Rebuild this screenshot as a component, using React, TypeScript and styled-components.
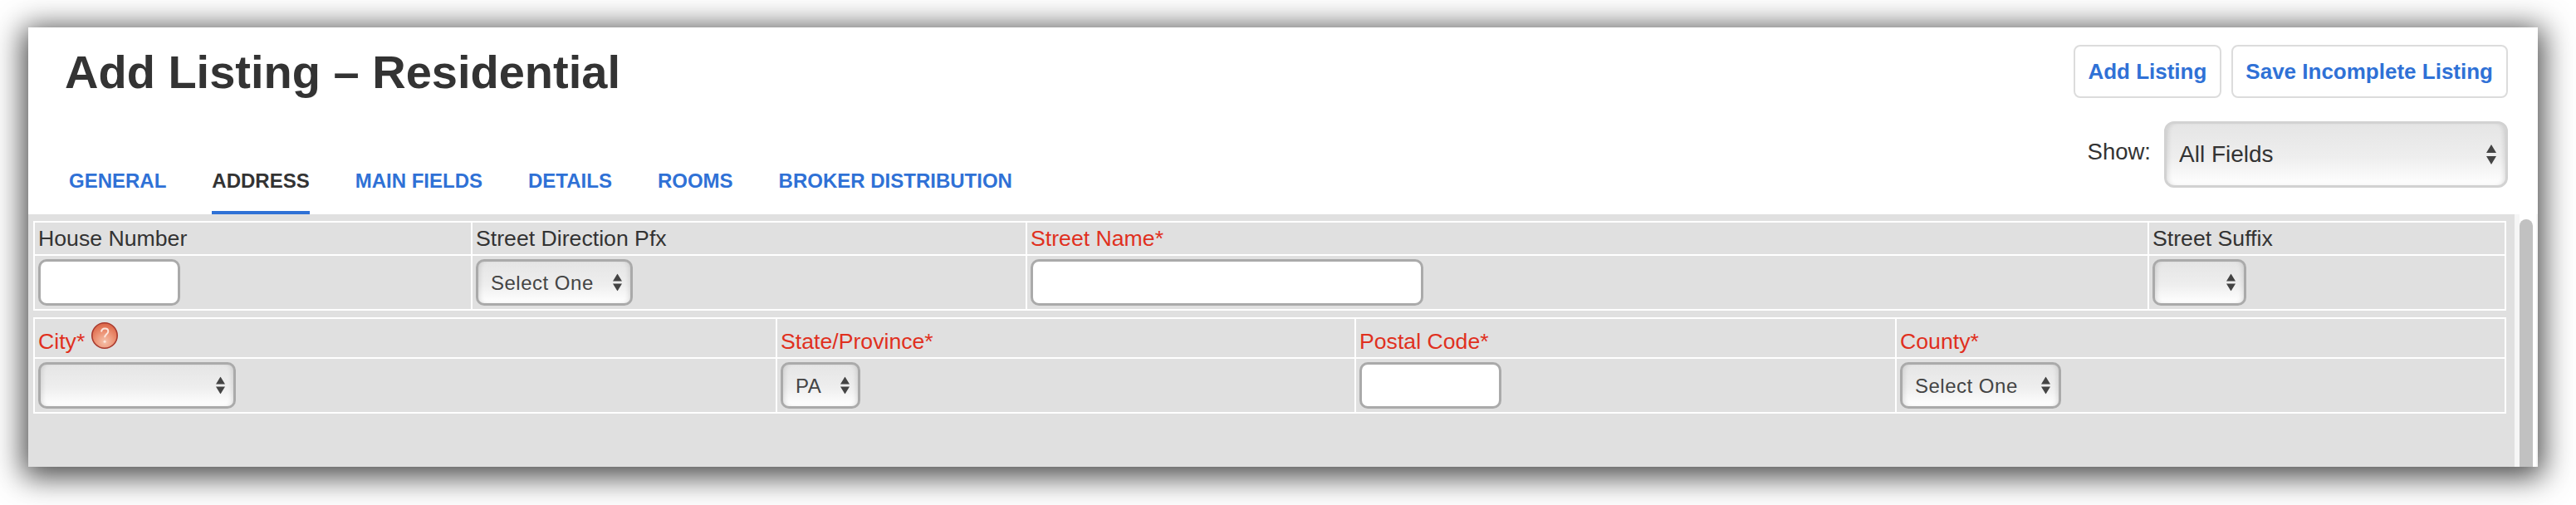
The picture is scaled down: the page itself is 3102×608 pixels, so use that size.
import React from "react";
import styled, { createGlobalStyle } from "styled-components";

const GlobalStyle = createGlobalStyle`
  html, body {
    margin: 0;
    background: #fff;
    overflow: hidden;
  }
  body {
    font-family: "Liberation Sans", Arial, sans-serif;
    color: #333;
  }
  * {
    box-sizing: border-box;
  }
`;

const Page = styled.div`
  padding: 33px 46px 46px 34px;
`;

const Panel = styled.div`
  display: flex;
  flex-direction: column;
  height: 529px;
  background: #fff;
  box-shadow: 0 6px 34px 6px rgba(0, 0, 0, 0.72);
`;

const Header = styled.header`
  display: flex;
  justify-content: space-between;
  height: 225px;
`;

const TitleColumn = styled.div`
  display: flex;
  flex-direction: column;
  justify-content: space-between;
  padding: 22px 0 0 44px;
`;

const Title = styled.h1`
  margin: 0;
  font-size: 56px;
  line-height: 64px;
  font-weight: 700;
  color: #333;
`;

const Tabs = styled.nav`
  display: flex;
  gap: 55px;
  margin-left: 5px;
`;

const Tab = styled.a<{ $active?: boolean }>`
  padding-bottom: 22px;
  border-bottom: 4px solid ${(p) => (p.$active ? "#2f71d6" : "transparent")};
  font-size: 24px;
  line-height: 28px;
  font-weight: 700;
  color: ${(p) => (p.$active ? "#333" : "#2f71d6")};
`;

const ActionColumn = styled.div`
  display: flex;
  flex-direction: column;
  align-items: flex-end;
  gap: 28px;
  padding: 21px 36px 0 0;
`;

const Actions = styled.div`
  display: flex;
  gap: 12px;
`;

const ActionButton = styled.button`
  height: 64px;
  padding: 0 16px 0 15px;
  background: #fff;
  border: 2px solid #dcdcdc;
  border-radius: 8px;
  font-family: inherit;
  font-size: 26px;
  font-weight: 700;
  color: #2f71d6;
`;

const ShowRow = styled.div`
  display: flex;
  align-items: center;
  gap: 16px;
`;

const ShowLabel = styled.label`
  margin-bottom: 6px;
  font-size: 27.5px;
  line-height: 30px;
  color: #333;
`;

const SelectWrap = styled.div<{ $width: number }>`
  position: relative;
  width: ${(p) => p.$width}px;
`;

const Select = styled.select<{ $large?: boolean }>`
  display: block;
  width: 100%;
  height: ${(p) => (p.$large ? 80 : 56)}px;
  padding: 0 0 ${(p) => (p.$large ? 2 : 0)}px 15px;
  appearance: none;
  background: linear-gradient(#e5e5e5, #eeeeee 55%, #fcfcfc 92%);
  border: 3px solid ${(p) => (p.$large ? "#d2d2d2" : "#aaa")};
  border-radius: ${(p) => (p.$large ? 12 : 10)}px;
  box-shadow: inset 5px 0 6px -4px rgba(0, 0, 0, 0.14),
    inset -5px 0 6px -4px rgba(0, 0, 0, 0.14);
  font-family: inherit;
  font-size: ${(p) => (p.$large ? 28 : 24)}px;
  letter-spacing: ${(p) => (p.$large ? 0 : 0.5)}px;
  color: ${(p) => (p.$large ? "#333" : "#444")};
`;

const ArrowsIcon = styled.svg<{ $large?: boolean }>`
  position: absolute;
  top: 50%;
  right: ${(p) => (p.$large ? 14 : 13)}px;
  width: ${(p) => (p.$large ? 12 : 11)}px;
  height: ${(p) => (p.$large ? 24 : 21)}px;
  transform: translateY(-50%);
  fill: #444;
  pointer-events: none;
`;

const TextInput = styled.input<{ $width: number }>`
  display: block;
  width: ${(p) => p.$width}px;
  height: 56px;
  background: #fff;
  border: 3px solid #aaa;
  border-radius: 10px;
`;

const Content = styled.div`
  display: flex;
  flex: 1;
  min-height: 0;
`;

const Form = styled.div`
  display: flex;
  flex: 1;
  flex-direction: column;
  gap: 8px;
  padding: 8px 10px 0 6px;
  background: #e0e0e0;
`;

const FieldTable = styled.div<{ $columns: string; $labelHeight: number }>`
  display: grid;
  grid-template-columns: ${(p) => p.$columns};
  grid-template-rows: ${(p) => p.$labelHeight}px 64px;
  gap: 2px;
  padding: 2px;
  background: #fff;
`;

const LabelCell = styled.div<{ $required?: boolean }>`
  display: flex;
  align-items: flex-end;
  gap: 8px;
  padding: 0 4px 4px;
  background: #e0e0e0;
  font-size: 26.67px;
  line-height: 30px;
  color: ${(p) => (p.$required ? "#e0301e" : "#333")};
`;

const FieldCell = styled.div`
  padding: 4px;
  background: #e0e0e0;
`;

const HelpBadge = styled.svg`
  width: 32px;
  height: 32px;
  margin-bottom: 6px;
`;

const ScrollTrack = styled.div`
  width: 28px;
  padding: 6px 4px 0 0;
  overflow: hidden;
  background: #fff;
  border-left: 6px solid #f6f6f6;
  border-right: 2px solid #f6f6f6;
`;

const ScrollThumb = styled.div`
  width: 16px;
  height: 100%;
  background: #c1c1c1;
  border-radius: 8px 8px 0 0;
`;

const Arrows = ({ large }: { large?: boolean }) => (
  <ArrowsIcon $large={large} viewBox={large ? "0 0 12 24" : "0 0 11 21"}>
    {large ? (
      <path d="M6 0l6 10H0zM6 24L0 14h12z" />
    ) : (
      <path d="M5.5 0L11 9H0zM5.5 21L0 12h11z" />
    )}
  </ArrowsIcon>
);

const Dropdown = ({ width, value = "" }: { width: number; value?: string }) => (
  <SelectWrap $width={width}>
    <Select defaultValue={value}>
      <option value={value}>{value}</option>
    </Select>
    <Arrows />
  </SelectWrap>
);

const HelpIcon = () => (
  <HelpBadge viewBox="0 0 32 32">
    <defs>
      <radialGradient id="helpFill" cx="50%" cy="74%" r="68%">
        <stop offset="0%" stopColor="#f5c2ab" />
        <stop offset="55%" stopColor="#ec9274" />
        <stop offset="100%" stopColor="#dd6a4c" />
      </radialGradient>
    </defs>
    <circle cx="16" cy="16" r="15.2" fill="url(#helpFill)" stroke="#a83a2e" strokeWidth="1.6" />
    <path
      d="M12 11.5c.4-2.6 2.1-4 4.3-4 2.3 0 4 1.4 4 3.4 0 3.2-4.2 3.6-4.2 7.4"
      fill="none"
      stroke="#fbe6dd"
      strokeWidth="2"
    />
    <circle cx="16.1" cy="23.2" r="1.5" fill="#fbe6dd" />
  </HelpBadge>
);

const tabs = ["GENERAL", "ADDRESS", "MAIN FIELDS", "DETAILS", "ROOMS", "BROKER DISTRIBUTION"];

export default function App() {
  return (
    <>
      <GlobalStyle />
      <Page>
        <Panel>
          <Header>
            <TitleColumn>
              <Title>Add Listing – Residential</Title>
              <Tabs>
                {tabs.map((tab) => (
                  <Tab key={tab} $active={tab === "ADDRESS"}>
                    {tab}
                  </Tab>
                ))}
              </Tabs>
            </TitleColumn>
            <ActionColumn>
              <Actions>
                <ActionButton>Add Listing</ActionButton>
                <ActionButton>Save Incomplete Listing</ActionButton>
              </Actions>
              <ShowRow>
                <ShowLabel>Show:</ShowLabel>
                <SelectWrap $width={414}>
                  <Select $large defaultValue="All Fields">
                    <option>All Fields</option>
                  </Select>
                  <Arrows large />
                </SelectWrap>
              </ShowRow>
            </ActionColumn>
          </Header>
          <Content>
            <Form>
              <FieldTable $columns="525px 666px 1349px 1fr" $labelHeight={38}>
                <LabelCell>House Number</LabelCell>
                <LabelCell>Street Direction Pfx</LabelCell>
                <LabelCell $required>Street Name*</LabelCell>
                <LabelCell>Street Suffix</LabelCell>
                <FieldCell>
                  <TextInput $width={171} />
                </FieldCell>
                <FieldCell>
                  <Dropdown width={189} value="Select One" />
                </FieldCell>
                <FieldCell>
                  <TextInput $width={473} />
                </FieldCell>
                <FieldCell>
                  <Dropdown width={113} />
                </FieldCell>
              </FieldTable>
              <FieldTable $columns="892px 695px 649px 1fr" $labelHeight={46}>
                <LabelCell $required>
                  City*
                  <HelpIcon />
                </LabelCell>
                <LabelCell $required>State/Province*</LabelCell>
                <LabelCell $required>Postal Code*</LabelCell>
                <LabelCell $required>County*</LabelCell>
                <FieldCell>
                  <Dropdown width={238} />
                </FieldCell>
                <FieldCell>
                  <Dropdown width={96} value="PA" />
                </FieldCell>
                <FieldCell>
                  <TextInput $width={171} />
                </FieldCell>
                <FieldCell>
                  <Dropdown width={194} value="Select One" />
                </FieldCell>
              </FieldTable>
            </Form>
            <ScrollTrack>
              <ScrollThumb />
            </ScrollTrack>
          </Content>
        </Panel>
      </Page>
    </>
  );
}
